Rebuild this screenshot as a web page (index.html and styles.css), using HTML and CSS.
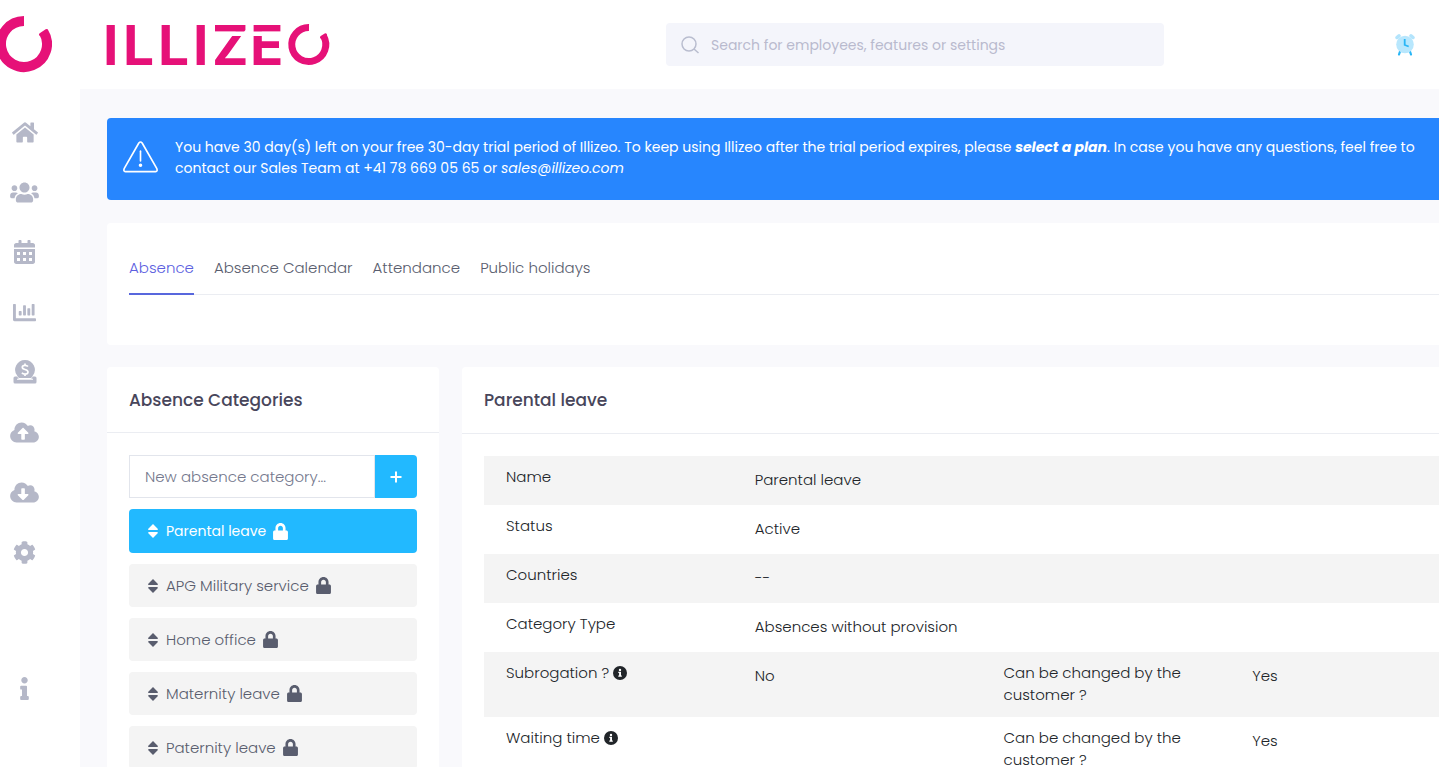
FILE: index.html
```html
<!DOCTYPE html>
<html lang="en">
<head>
<meta charset="utf-8">
<title>Illizeo – Absence</title>
<link rel="stylesheet" href="styles.css">
</head>
<body>
<svg class="sprite" aria-hidden="true">
  <symbol id="lock" viewBox="0 0 448 512"><path d="M400 224h-24v-72C376 68.2 307.8 0 224 0S72 68.2 72 152v72H48c-26.500 0-48 21.500-48 48v192c0 26.500 21.500 48 48 48h352c26.500 0 48-21.500 48-48V272c0-26.500-21.500-48-48-48zm-104 0H152v-72c0-39.700 32.300-72 72-72s72 32.300 72 72v72z"/></symbol>
  <symbol id="sort" viewBox="0 0 10 14"><path d="M5 0 9.700 4.800Q10.200 6 9 6H1Q-.2 6 .3 4.800ZM5 14 .3 9.200Q-.2 8 1 8H9Q10.200 8 9.700 9.200Z"/></symbol>
  <symbol id="info" viewBox="0 0 192 512"><path d="M20 424.229h20V279.771H20c-11.046 0-20-8.954-20-20V212c0-11.046 8.954-20 20-20h112c11.046 0 20 8.954 20 20v212.229h20c11.046 0 20 8.954 20 20V492c0 11.046-8.954 20-20 20H20c-11.046 0-20-8.954-20-20v-47.771c0-11.046 8.954-20 20-20zM96 0C56.235 0 24 32.235 24 72s32.235 72 72 72 72-32.235 72-72S135.764 0 96 0z"/></symbol>
  <symbol id="info-circle" viewBox="0 0 14 14"><circle cx="7" cy="7" r="7"/><path fill="#fff" d="M5.300 5.800H8V9.400h.8v1.300H5.300V9.400h.8V7.100h-.8zM7 2.700a1.200 1.200 0 1 1 0 2.400 1.200 1.200 0 0 1 0-2.400z"/></symbol>
</svg>
<div class="app">
  <aside class="sidebar">
    <a class="mark" href="#" aria-label="Illizeo"><svg width="56" height="60" viewBox="-4 14 56 60"><path d="M24 21A23 23 0 1 0 43.500 31.800" fill="none" stroke="#e61178" stroke-width="10"/><path d="M40.500 34.500 46.500 30.500" stroke="#e61178" stroke-width="3" stroke-linecap="round"/></svg></a>
    <nav class="nav" aria-label="Main">
      <a href="#" aria-label="Home"><svg width="26" height="23" viewBox="0 0 576 512"><path d="M280.370 148.260L96 300.110V464a16 16 0 0 0 16 16l112.060-.29a16 16 0 0 0 15.920-16V368a16 16 0 0 1 16-16h64a16 16 0 0 1 16 16v95.640a16 16 0 0 0 16 16.050L464 480a16 16 0 0 0 16-16V300L295.670 148.260a12.190 12.190 0 0 0-15.300 0zM571.600 251.470L488 182.560V44.050a12 12 0 0 0-12-12h-56a12 12 0 0 0-12 12v72.610L318.470 43a48 48 0 0 0-61 0L4.340 251.470a12 12 0 0 0-1.600 16.900l25.500 31A12 12 0 0 0 45.150 301l235.220-193.740a12.190 12.190 0 0 1 15.300 0L530.900 301a12 12 0 0 0 16.900-1.600l25.500-31a12 12 0 0 0-1.700-16.930z"/></svg></a>
      <a href="#" aria-label="Employees"><svg width="29" height="23" viewBox="0 0 640 512"><path d="M96 224c35.300 0 64-28.700 64-64s-28.700-64-64-64-64 28.700-64 64 28.700 64 64 64zm448 0c35.300 0 64-28.700 64-64s-28.700-64-64-64-64 28.700-64 64 28.700 64 64 64zm32 32h-64c-17.600 0-33.500 7.100-45.100 18.600 40.300 22.100 68.900 62 75.100 109.400h66c17.700 0 32-14.300 32-32v-32c0-35.300-28.700-64-64-64zm-256 0c61.900 0 112-50.100 112-112S381.900 32 320 32 208 82.100 208 144s50.100 112 112 112zm76.800 32h-8.300c-20.800 10-43.900 16-68.500 16s-47.600-6-68.500-16h-8.300C179.600 288 128 339.600 128 403.200V432c0 26.500 21.500 48 48 48h288c26.500 0 48-21.500 48-48v-28.800c0-63.600-51.600-115.200-115.200-115.200zm-223.700-13.400C161.500 263.100 145.600 256 128 256H64c-35.300 0-64 28.700-64 64v32c0 17.700 14.300 32 32 32h65.900c6.300-47.400 34.900-87.300 75.200-109.400z"/></svg></a>
      <a href="#" aria-label="Calendar"><svg width="21" height="24" viewBox="0 0 448 512"><path fill-rule="evenodd" d="M0 464c0 26.500 21.500 48 48 48h352c26.500 0 48-21.500 48-48V192H0zM64 256h64v64H64zm128 0h64v64h-64zm128 0h64v64h-64zM64 384h64v64H64zm128 0h64v64h-64zm128 0h64v64h-64zM400 64h-48V16c0-8.800-7.200-16-16-16h-32c-8.800 0-16 7.200-16 16v48H160V16c0-8.800-7.200-16-16-16h-32c-8.800 0-16 7.200-16 16v48H48C21.500 64 0 85.500 0 112v48h448v-48c0-26.500-21.500-48-48-48z"/></svg></a>
      <a href="#" aria-label="Reports"><svg width="23" height="23" viewBox="0 0 512 512"><path d="M332.800 320h38.400c6.400 0 12.800-6.400 12.800-12.800V172.800c0-6.400-6.400-12.800-12.800-12.800h-38.400c-6.400 0-12.800 6.400-12.800 12.800v134.400c0 6.400 6.400 12.800 12.800 12.800zm96 0h38.400c6.400 0 12.800-6.400 12.800-12.800V76.800c0-6.400-6.400-12.800-12.800-12.800h-38.400c-6.400 0-12.800 6.400-12.800 12.800v230.400c0 6.400 6.400 12.800 12.800 12.800zm-288 0h38.400c6.400 0 12.800-6.400 12.800-12.800v-70.400c0-6.400-6.400-12.800-12.800-12.800h-38.400c-6.400 0-12.800 6.400-12.800 12.800v70.400c0 6.400 6.400 12.800 12.800 12.800zm96 0h38.400c6.400 0 12.800-6.400 12.800-12.800V108.800c0-6.400-6.400-12.800-12.800-12.800h-38.400c-6.400 0-12.800 6.400-12.800 12.800v198.400c0 6.400 6.400 12.800 12.800 12.800zM496 384H64V80c0-8.840-7.160-16-16-16H16C7.160 64 0 71.160 0 80v336c0 17.670 14.330 32 32 32h464c8.840 0 16-7.160 16-16v-32c0-8.840-7.160-16-16-16z"/></svg></a>
      <a href="#" aria-label="Payroll"><svg width="24" height="24" viewBox="0 0 24 24"><path d="M12 0a9.800 9.800 0 0 1 7.600 16q-.6 1-1.500 2H5.900Q5 17 4.400 16A9.800 9.800 0 0 1 12 0z"/><path d="M2 16.500h2.300q.6 1.200 1.500 2.200H4v1h16v-1h-1.800q.9-1 1.500-2.200H22q1.500 0 1.500 1.500v4q0 1.500-1.500 1.500H2Q.5 23.500.5 22v-4q0-1.500 1.500-1.500z"/><path d="M15 6.600Q14 5.300 12 5.300 9.300 5.300 9.300 7.300 9.300 8.900 12 9.500 15 10.100 15 12 15 14.100 12 14.100 9.900 14.100 8.900 12.700M12 3.500v2M12 14v2" fill="none" stroke="#fff" stroke-width="1.700"/></svg></a>
      <a href="#" aria-label="Upload"><svg width="29" height="23" viewBox="0 0 640 512"><path d="M537.600 226.600c4.100-10.700 6.400-22.400 6.400-34.600 0-53-43-96-96-96-19.700 0-38.100 6-53.300 16.200C367 64.200 315.300 32 256 32c-88.400 0-160 71.600-160 160 0 2.700.1 5.400.2 8.100C40.200 219.800 0 273.200 0 336c0 79.500 64.500 144 144 144h368c70.700 0 128-57.300 128-128 0-61.900-44-113.600-102.400-125.400zM393.400 288H328v112c0 8.800-7.200 16-16 16h-48c-8.800 0-16-7.200-16-16V288h-65.400c-14.300 0-21.400-17.200-11.300-27.300l105.400-105.400c6.200-6.200 16.400-6.200 22.600 0l105.400 105.400c10.100 10.100 2.900 27.300-11.300 27.300z"/></svg></a>
      <a href="#" aria-label="Download"><svg width="29" height="23" viewBox="0 0 640 512"><path d="M537.600 226.600c4.100-10.700 6.400-22.400 6.400-34.600 0-53-43-96-96-96-19.700 0-38.100 6-53.300 16.200C367 64.200 315.300 32 256 32c-88.400 0-160 71.600-160 160 0 2.700.1 5.400.2 8.100C40.200 219.800 0 273.200 0 336c0 79.500 64.500 144 144 144h368c70.700 0 128-57.300 128-128 0-61.900-44-113.600-102.400-125.400zm-132.900 88.700L299.300 420.700c-6.200 6.200-16.400 6.200-22.600 0L171.300 315.300c-10.100-10.100-2.900-27.300 11.300-27.300H248V176c0-8.800 7.200-16 16-16h48c8.800 0 16 7.200 16 16v112h65.400c14.200 0 21.400 17.200 11.300 27.300z"/></svg></a>
      <a href="#" aria-label="Settings"><svg width="23" height="23" viewBox="0 0 512 512"><path d="M487.400 315.700l-42.600-24.600c4.300-23.200 4.300-47 0-70.200l42.600-24.600c4.900-2.800 7.100-8.600 5.500-14-11.100-35.600-30-67.800-54.700-94.600-3.800-4.100-10-5.100-14.800-2.300L380.800 110c-17.900-15.400-38.500-27.300-60.800-35.100V25.800c0-5.600-3.900-10.500-9.400-11.700-36.700-8.200-74.300-7.800-109.200 0-5.500 1.200-9.400 6.100-9.400 11.700V75c-22.200 7.900-42.800 19.800-60.800 35.100L88.700 85.500c-4.900-2.800-11-1.900-14.800 2.300-24.700 26.700-43.600 58.900-54.700 94.600-1.700 5.400.6 11.200 5.500 14L67.300 221c-4.300 23.200-4.300 47 0 70.200l-42.600 24.600c-4.900 2.800-7.100 8.600-5.500 14 11.100 35.600 30 67.800 54.700 94.600 3.800 4.100 10 5.100 14.800 2.300l42.600-24.600c17.900 15.400 38.500 27.300 60.800 35.100v49.200c0 5.600 3.900 10.500 9.400 11.700 36.700 8.200 74.300 7.800 109.200 0 5.500-1.200 9.400-6.100 9.400-11.700v-49.200c22.200-7.900 42.800-19.800 60.800-35.100l42.600 24.600c4.900 2.800 11 1.900 14.800-2.300 24.700-26.700 43.600-58.900 54.700-94.600 1.500-5.500-.7-11.300-5.600-14.100zM256 336c-44.100 0-80-35.900-80-80s35.900-80 80-80 80 35.900 80 80-35.900 80-80 80z"/></svg></a>
      <a class="nav-help" href="#" aria-label="Information"><svg width="9" height="23"><use href="#info"/></svg></a>
    </nav>
  </aside>
  <div class="page">
    <header class="topbar">
      <a class="logo" href="#" aria-label="Illizeo">
        <svg width="226" height="50" viewBox="105 20 226 50">
          <text class="wordmark" y="65" x="103 123 158 193 212 250">ILLIZE</text>
          <path d="M212 33.700h73" stroke="#fff" stroke-width="4.500"/>
          <path d="M309 27.500A17 17 0 1 0 323.500 36" fill="none" stroke="#e61178" stroke-width="7"/>
          <path d="M321.500 37.200 325.500 34.800" stroke="#e61178" stroke-width="3" stroke-linecap="round"/>
        </svg>
      </a>
      <label class="search">
        <svg class="line" width="18" height="18" viewBox="0 0 18 18" stroke="#b9bdcf" stroke-width="1.500"><circle cx="8" cy="8" r="7"/><path d="M13 13l4.500 4"/></svg>
        <input type="search" placeholder="Search for employees, features or settings" aria-label="Search for employees, features or settings">
      </label>
      <button class="clock" type="button" aria-label="Time tracking"><svg width="20" height="23" viewBox="0 0 20 23"><path d="M2 4.500 4 2.800M18 4.500 16 2.800" stroke="#b3e4fc" stroke-width="3.500" stroke-linecap="round"/><path d="M5 18.500 4 21.500M15 18.500 16 21.500" stroke="#29b6f6" stroke-width="2.200" stroke-linecap="round"/><circle cx="10" cy="11.500" r="8.800" fill="#b8e7fd"/><path d="M9.700 6v6l4 1.500" fill="none" stroke="#29b6f6" stroke-width="1.800"/></svg></button>
    </header>
    <main class="main">
      <div class="content">
        <section class="banner" role="alert">
          <svg class="line" width="37" height="34" viewBox="0 0 38 34" stroke="#fff" stroke-width="1.700" stroke-linejoin="round"><path d="M17.300 2.600Q19 .6 20.700 2.600L35.800 29Q36.800 31.800 34.500 32H3.500Q1.200 31.800 2.200 29Z"/><path d="M19 11v10" stroke-linecap="round"/><circle cx="19" cy="25.500" r="1" fill="#fff"/></svg>
          <p>You have 30 day(s) left on your free 30-day trial period of Illizeo. To keep using Illizeo after the trial period expires, please <a class="plan" href="#">select a plan</a>. In case you have any questions, feel free to<br>contact our Sales Team at +41 78 669 05 65 or <a href="mailto:sales@illizeo.com">sales@illizeo.com</a></p>
        </section>
        <section class="card tabs-card">
          <nav class="tabs" aria-label="Absence sections">
            <a class="active" href="#">Absence</a><a href="#">Absence Calendar</a><a href="#">Attendance</a><a href="#">Public holidays</a>
          </nav>
        </section>
        <div class="columns">
          <section class="card categories">
            <h2>Absence Categories</h2>
            <div class="card-body">
              <form class="add">
                <input type="text" placeholder="New absence category..." aria-label="New absence category">
                <button type="button" aria-label="Add category"><svg width="12" height="12" viewBox="0 0 12 12"><path d="M6 .5v11M.5 6h11" stroke="#fff" stroke-width="2"/></svg></button>
              </form>
              <ul class="list">
                <li><a class="selected" href="#"><svg class="sort"><use href="#sort"/></svg>Parental leave<svg class="lock"><use href="#lock"/></svg></a></li>
                <li><a href="#"><svg class="sort"><use href="#sort"/></svg>APG Military service<svg class="lock"><use href="#lock"/></svg></a></li>
                <li><a href="#"><svg class="sort"><use href="#sort"/></svg>Home office<svg class="lock"><use href="#lock"/></svg></a></li>
                <li><a href="#"><svg class="sort"><use href="#sort"/></svg>Maternity leave<svg class="lock"><use href="#lock"/></svg></a></li>
                <li><a href="#"><svg class="sort"><use href="#sort"/></svg>Paternity leave<svg class="lock"><use href="#lock"/></svg></a></li>
              </ul>
            </div>
          </section>
          <section class="card details">
            <h2>Parental leave</h2>
            <div class="card-body">
              <table>
                <tr><th scope="row">Name</th><td colspan="3">Parental leave</td></tr>
                <tr><th scope="row">Status</th><td colspan="3">Active</td></tr>
                <tr><th scope="row">Countries</th><td colspan="3">--</td></tr>
                <tr><th scope="row">Category Type</th><td colspan="3">Absences without provision</td></tr>
                <tr><th scope="row">Subrogation ? <svg class="hint"><use href="#info-circle"/></svg></th><td>No</td><th scope="row">Can be changed by the customer ?</th><td>Yes</td></tr>
                <tr><th scope="row">Waiting time <svg class="hint"><use href="#info-circle"/></svg></th><td></td><th scope="row">Can be changed by the customer ?</th><td>Yes</td></tr>
              </table>
            </div>
          </section>
        </div>
      </div>
    </main>
  </div>
</div>
</body>
</html>
```
FILE: styles.css
```css
* { box-sizing: border-box; }
body {
  margin: 0;
  overflow: hidden;
  background: #fff;
  color: #212529;
  font: 300 15px/22px Poppins, Inter, sans-serif;
}
a { color: inherit; text-decoration: none; }
button, input { font: inherit; margin: 0; border: 0; }
svg { fill: currentColor; flex: none; }
.line { fill: none; }
.sprite { display: none; }

.app { display: flex; height: 100vh; }
.sidebar { flex: none; width: 80px; }
.mark { display: block; height: 102px; padding-top: 14px; }
.mark svg { display: block; margin-left: -4px; }
.nav { display: flex; flex-direction: column; width: 49px; color: #b5b8c8; }
.nav a { display: flex; align-items: center; justify-content: center; height: 60px; }
.nav .nav-help { margin-top: 76px; }

.page { flex: 1; min-width: 0; display: flex; flex-direction: column; }
.topbar { display: flex; align-items: center; flex: none; height: 89px; padding: 0 24px 0 25px; }
.logo svg { display: block; overflow: visible; }
.wordmark { font: 700 55px Inter, sans-serif; fill: #e61178; }
.search {
  display: flex;
  align-items: center;
  gap: 12px;
  width: 498px;
  height: 43px;
  margin-left: 335px;
  padding: 0 15px;
  border-radius: 4px;
  background: #f4f5fb;
}
.search input { flex: 1; min-width: 0; padding: 0; background: none; outline: 0; font-size: 14px; font-weight: 400; }
.search input::placeholder { color: #b9bace; opacity: 1; }
.clock { display: flex; margin-left: auto; padding: 0; background: none; }

.main { flex: 1; min-height: 0; overflow: hidden; padding: 29px 0 0 27px; background: #f9f9fc; }
/* the content runs past the right edge of the viewport */
.content { width: calc(100% + 62px); }
.banner {
  display: flex;
  gap: 16px;
  height: 82px;
  padding: 19px 15px;
  border-radius: 4px;
  background: #2786fe;
  color: #fff;
  font-size: 14px;
  line-height: 21px;
  font-weight: 400;
  white-space: nowrap;
}
.banner svg { margin-top: 3px; }
.banner p { margin: 0; }
.banner a { font-style: italic; }
.banner .plan { font-weight: 700; }

.card { border-radius: 4px; background: #fff; }
.tabs-card { height: 122px; margin-top: 23px; padding: 22px; }
.tabs { display: flex; gap: 20px; height: 50px; border-bottom: 1px solid #ebedf2; color: #595d6e; }
.tabs a { height: 50px; padding-top: 12px; }
.tabs .active { color: #5d5fdf; border-bottom: 2px solid #5867dd; }

.columns { display: flex; align-items: flex-start; gap: 23px; margin-top: 22px; }
.card h2 { margin: 0; padding: 22px; border-bottom: 1px solid #ebedf2; color: #48465b; font-size: 17px; line-height: 22px; font-weight: 500; }
.card-body { padding: 22px; }
.categories { flex: none; width: 332px; }
.categories h2 { padding-bottom: 21px; }
.details { flex: 1; min-width: 0; }
.add { display: flex; height: 43px; }
.add input { flex: 1; min-width: 0; padding: 0 15px; border: 1px solid #e2e5ec; outline: 0; }
.add input::placeholder { color: #74788d; opacity: 1; }
.add button { display: flex; align-items: center; justify-content: center; width: 42px; border-radius: 0 4px 4px 0; background: #22b9ff; }
.list { display: grid; gap: 11px; margin: 11px 0 0; padding: 0; list-style: none; }
.list a { display: flex; align-items: center; height: 43px; padding: 0 19px; border-radius: 4px; background: #f4f4f4; color: #595d6e; }
.list .selected { height: 44px; background: #22b9ff; color: #fff; font-size: 14px; font-weight: 400; }
.sort { width: 10px; height: 14px; margin-right: 8px; }
.lock { width: 15px; height: 17px; margin-left: 7px; }

table { width: 100%; table-layout: fixed; border-collapse: collapse; }
th, td { height: 49px; vertical-align: top; text-align: left; font-weight: 300; }
th { padding: 10px 22px 11px; }
td { padding: 13px 22px 11px; }
tr:nth-child(odd) { background: #f4f4f4; }
.hint { width: 14px; height: 14px; vertical-align: -2px; }
```
